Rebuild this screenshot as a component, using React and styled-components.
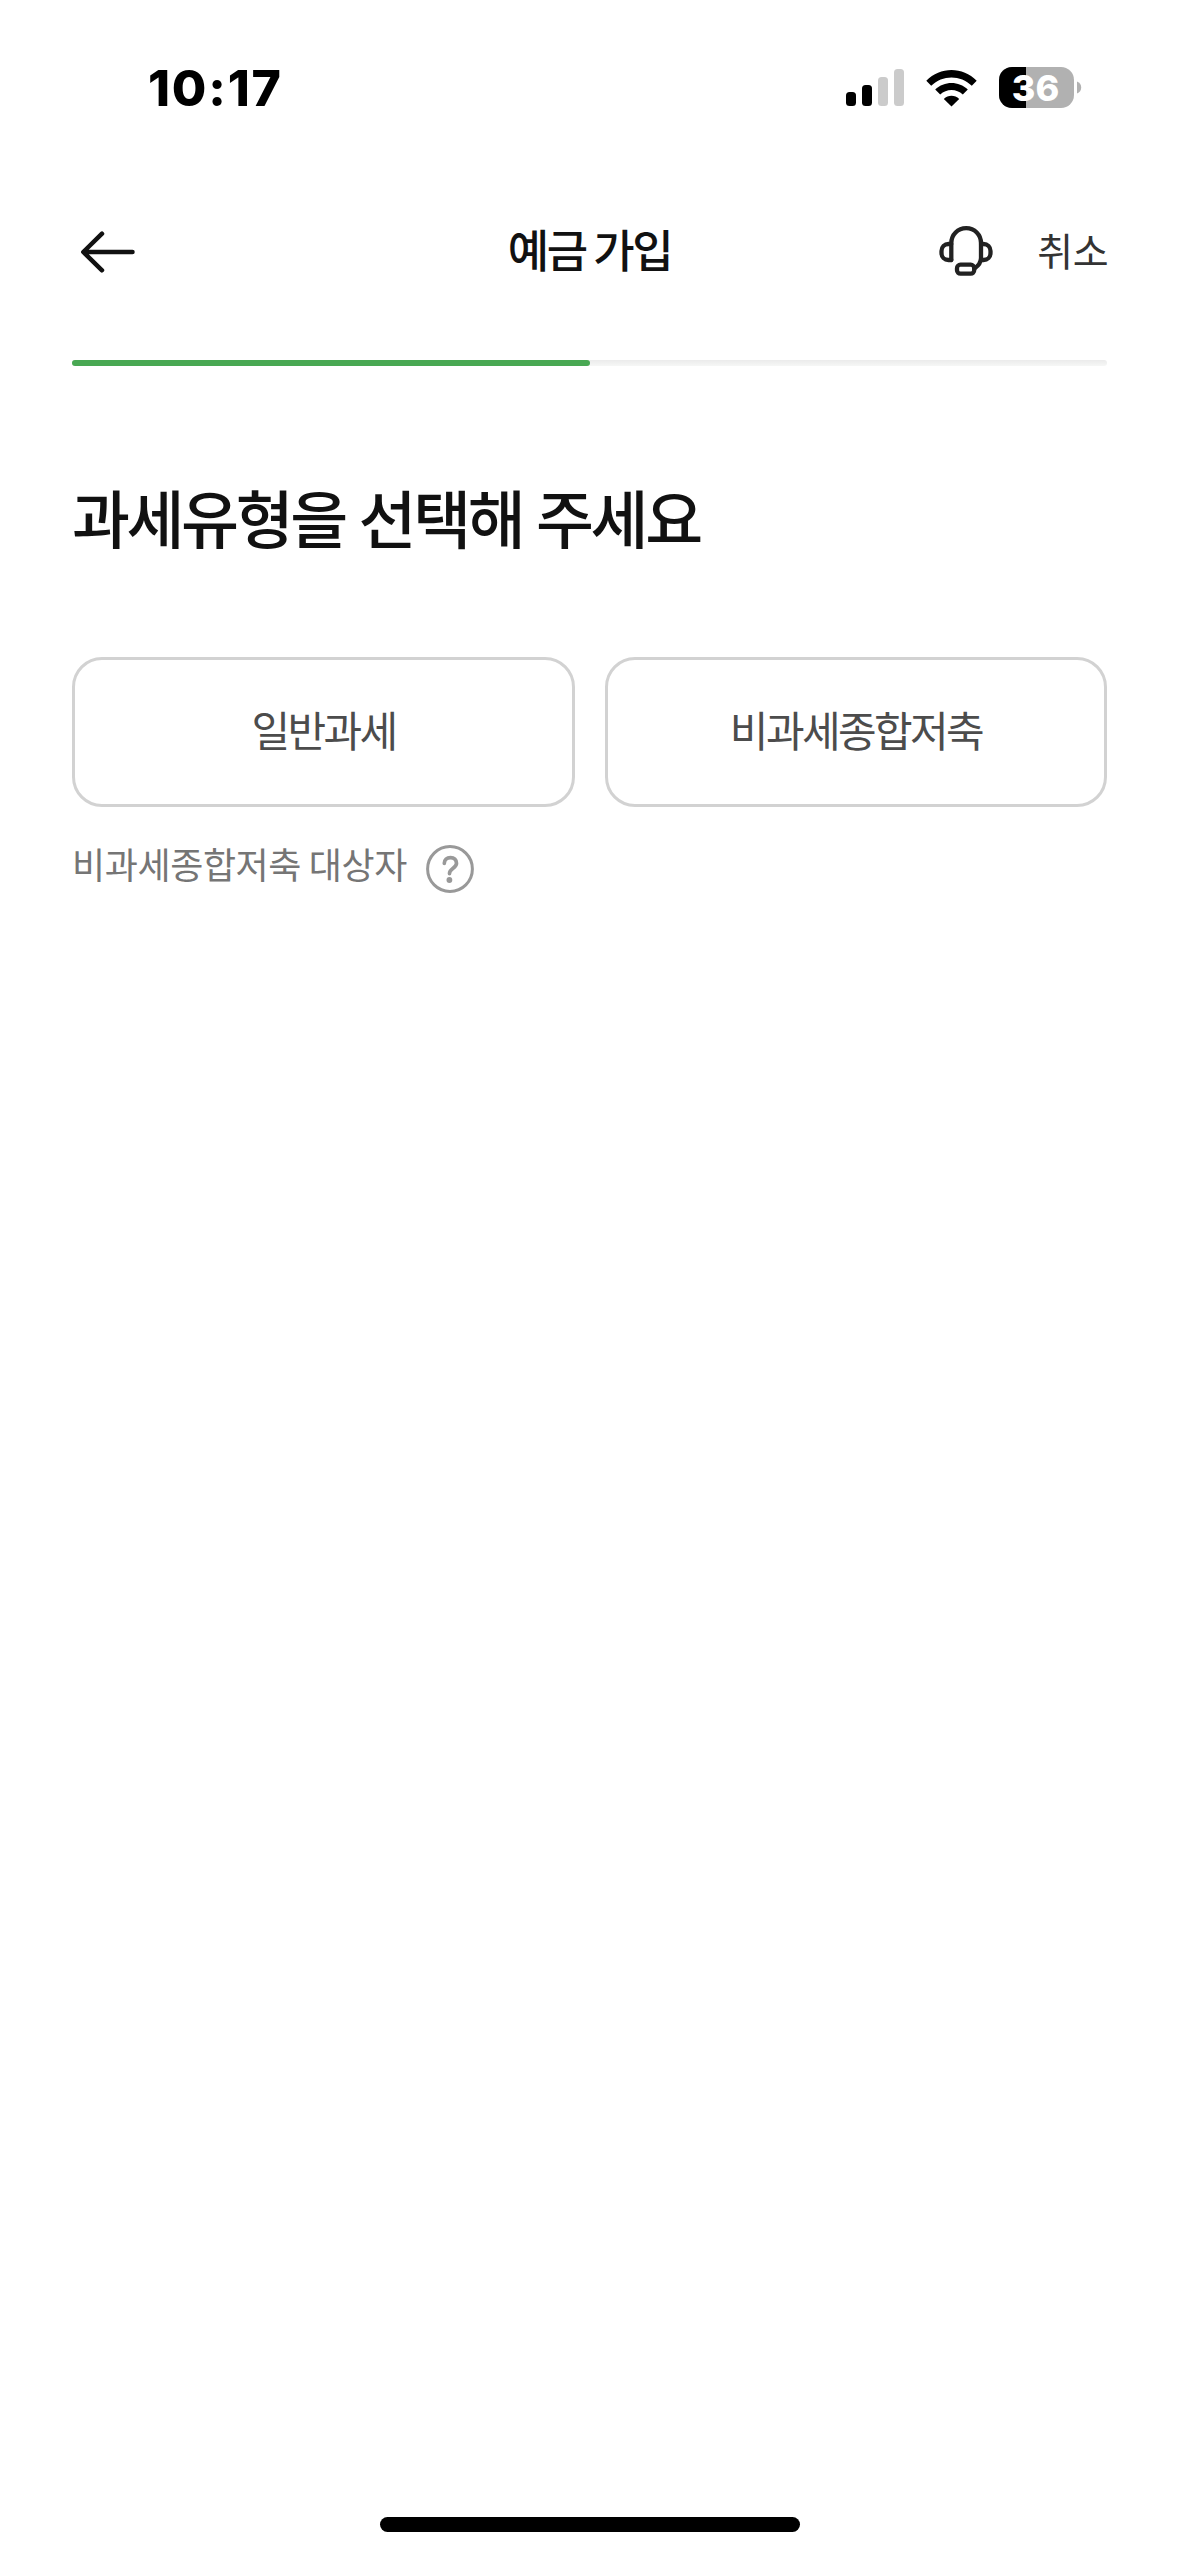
import React from "react";
import styled, { createGlobalStyle } from "styled-components";

const GlobalStyle = createGlobalStyle`
  * {
    box-sizing: border-box;
  }
  body {
    margin: 0;
    background: #fff;
  }
`

const TAX_TYPES = ["일반과세", "비과세종합저축"];

const BatteryIcon = () => (
    <svg width="83" height="41" viewBox="0 0 83 41">
        <defs>
            <clipPath id="battery">
                <rect width="75" height="41" rx="13" />
            </clipPath>
        </defs>
        <g clipPath="url(#battery)">
            <rect width="75" height="41" fill="#b1b1b1" />
            <rect width="27" height="41" fill="#000" />
        </g>
        <path d="M78 14.5c2.7 1 4.2 3.300 4.200 6s-1.500 5-4.200 6z" fill="#b1b1b1" />
    </svg>
)

const WifiIcon = () => (
    <svg width="51" height="38" viewBox="0 0 51 38">
        <path d="M25.500 37.500L17.800 30c4.300-4.200 11.100-4.200 15.400 0z" />
        <path d="M9.200 20.600c9-8.900 23.600-8.900 32.600 0l-5 5c-6.200-6.200-16.400-6.200-22.600 0z" />
        <path d="M.3 11.700c13.900-14.400 36.500-14.400 50.400 0l-4.900 5.100c-11.200-11.200-29.400-11.200-40.600 0z" />
    </svg>
)

const ArrowIcon = () => (
    <svg width="72" height="72" viewBox="0 0 72 72" fill="none" stroke="#111" strokeWidth="4.5" strokeLinecap="round" strokeLinejoin="round">
        <path d="M60.500 36H12M30 17.700L11.300 36L30 54.300" />
    </svg>
)

const HeadsetIcon = () => (
    <svg width="54" height="54" viewBox="0 0 54 54" fill="none" stroke="#222" strokeWidth="4.3" strokeLinecap="round" strokeLinejoin="round">
        <path d="M12.300 35V18C12.300 9.500 18.800 3.200 27.200 3.200S42 9.500 42 18v15c0 4.500-2.300 7.500-6.500 10.500" />
        <path d="M12.300 19H9.500c-4 0-7 3-7 7v2c0 4 3 7 7 7h2.800" />
        <path d="M42 19h2.500c4 0 7 3 7 7v2c0 4-3 7-7 7H42" />
        <rect x="18" y="39.700" width="17.200" height="9" rx="3.500" />
    </svg>
)

const HelpIcon = () => (
    <svg width="48" height="48" viewBox="0 0 48 48" fill="none" stroke="#999" strokeLinecap="round">
        <circle cx="24" cy="24" r="22.400" strokeWidth="3" />
        <path d="M18.300 18.300c0-3.600 2.500-5.700 6.200-5.700s6 2.200 6 5.700c0 4.900-7 5.100-7 10.300" strokeWidth="3.700" />
        <circle cx="23.400" cy="35" r="2.900" fill="#999" stroke="none" />
    </svg>
)

const App = () => {
    return (
        <>
            <GlobalStyle />
            <Screen>
                <StatusBar>
                    <Time>10:17</Time>
                    <StatusIcons>
                        <Signal>
                            <Bar $height={14} />
                            <Bar $height={21} />
                            <Bar $height={29} $off />
                            <Bar $height={37} $off />
                        </Signal>
                        <WifiIcon />
                        <Battery>
                            <BatteryIcon />
                            <BatteryLevel>36</BatteryLevel>
                        </Battery>
                    </StatusIcons>
                </StatusBar>
                <Header>
                    <BackButton><ArrowIcon /></BackButton>
                    <Title>예금 가입</Title>
                    <Actions>
                        <HeadsetIcon />
                        <Cancel>취소</Cancel>
                    </Actions>
                </Header>
                <Progress>
                    <ProgressFill />
                </Progress>
                <Heading>과세유형을 선택해 주세요</Heading>
                <Options>
                    {TAX_TYPES.map((type) => (
                        <Option key={type}>{type}</Option>
                    ))}
                </Options>
                <Help>
                    <HelpText>비과세종합저축 대상자</HelpText>
                    <HelpIcon />
                </Help>
                <HomeIndicator />
            </Screen>
        </>
    )
}

export default App;

const Screen = styled.div`
  display: flex;
  flex-direction: column;
  width: 1179px;
  height: 2556px;
  padding: 0 72px 24px;
  background: #fff;
  font-family: "Noto Sans CJK KR", sans-serif;
`

const StatusBar = styled.div`
  display: flex;
  justify-content: space-between;
  align-items: center;
  height: 175px;
  padding: 0 25px 0 76px;
`

const Time = styled.span`
  font-family: Inter, sans-serif;
  font-weight: 800;
  font-size: 50px;
  line-height: 60px;
  letter-spacing: 1.8px;
`

const StatusIcons = styled.div`
  display: flex;
  align-items: center;
`

const Signal = styled.div`
  display: flex;
  align-items: flex-end;
  gap: 6px;
  margin-right: 22px;
`

const Bar = styled.span`
  width: 10px;
  height: ${({ $height }) => $height}px;
  border-radius: 3.5px;
  background: ${({ $off }) => ($off ? "#cbcbcb" : "#000")};
`

const Battery = styled.div`
  position: relative;
  height: 41px;
  margin-left: 22px;
`

const BatteryLevel = styled.span`
  position: absolute;
  top: 0;
  left: 0;
  width: 73px;
  text-align: center;
  font-family: Inter, sans-serif;
  font-weight: 800;
  font-size: 36px;
  line-height: 42px;
  color: #fff;
`

const Header = styled.header`
  display: grid;
  grid-template-columns: 1fr auto 1fr;
  align-items: center;
  height: 154px;
`

const BackButton = styled.button`
  justify-self: start;
  display: flex;
  padding: 0;
  border: 0;
  background: none;
`

const Title = styled.h1`
  margin: 0;
  padding-bottom: 6px;
  font-weight: 500;
  font-size: 45px;
  line-height: 66px;
  letter-spacing: -2.4px;
  color: #111;
`

const Actions = styled.div`
  display: flex;
  justify-content: flex-end;
  align-items: center;
  gap: 44px;
`

const Cancel = styled.span`
  margin-right: -1.5px;
  padding-bottom: 6px;
  font-size: 39px;
  line-height: 56px;
  letter-spacing: -0.2px;
  color: #333;
`

const Progress = styled.div`
  height: 6px;
  margin-top: 31px;
  border-radius: 3px;
  background: linear-gradient(#ebebeb, #f6f7f6);
`

const ProgressFill = styled.div`
  width: 518px;
  height: 6px;
  border-radius: 3px;
  background: #49a853;
`

const Heading = styled.h2`
  margin: 102px 0 0;
  font-weight: 500;
  font-size: 63px;
  line-height: 96px;
  letter-spacing: -3.4px;
  word-spacing: 3px;
  color: #111;
`

const Options = styled.div`
  display: grid;
  grid-template-columns: 503px 502px;
  gap: 30px;
  margin-top: 93px;
`

const Option = styled.button`
  height: 150px;
  padding: 0 0 7px;
  border: 3px solid #d2d2d2;
  border-radius: 30px;
  background: #fff;
  font-family: inherit;
  font-size: 42px;
  letter-spacing: -2.6px;
  color: #4c4c4c;
`

const Help = styled.div`
  display: flex;
  align-items: flex-end;
  gap: 19px;
  margin-top: 26px;
`

const HelpText = styled.span`
  font-size: 36px;
  line-height: 60px;
  letter-spacing: -0.4px;
  color: #757575;
`

const HomeIndicator = styled.div`
  width: 420px;
  height: 15px;
  margin: auto auto 0;
  border-radius: 8px;
  background: #000;
`
